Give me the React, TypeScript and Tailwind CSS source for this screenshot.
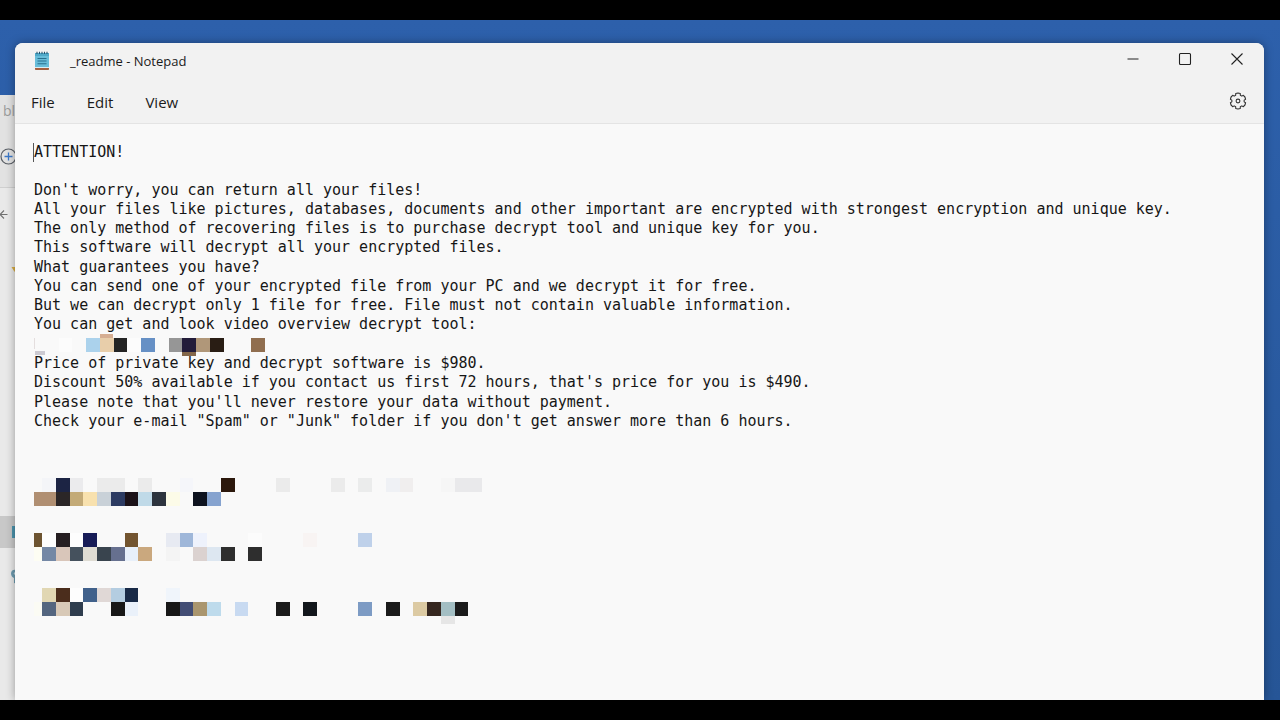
import React from "react";

type Cell = [col: number, color: string];

const PITCH = 13.75;

function Row({ origin, y, cells }: { origin: number; y: number; cells: Cell[] }) {
  return (
    <>
      {cells.map(([col, color]) => {
        const x = Math.max(0, Math.round(origin + col * PITCH));
        const end = Math.round(origin + (col + 1) * PITCH);
        return <rect key={col} x={x} y={y} width={end - x} height={14} fill={color} />;
      })}
    </>
  );
}

const contactRows: { y: number; cells: Cell[] }[] = [
  {
    y: 6,
    cells: [
      [0, "#f4f5f8"], [1, "#1c2444"], [2, "#ebebed"], [4, "#ebebeb"], [5, "#ebebeb"], [7, "#ebebeb"],
      [10, "#f5f6fa"], [13, "#2c180c"], [17, "#ebebeb"], [21, "#ebebeb"], [23, "#ebecec"],
      [25, "#eff1f5"], [26, "#f0eeee"], [29, "#f6f6f6"], [30, "#e9e9eb"], [31, "#e9e9eb"],
    ],
  },
  {
    y: 20,
    cells: [
      [-1, "#b08f72"], [0, "#b08f72"], [1, "#2b2627"], [2, "#c3aa77"], [3, "#f8e1ae"], [4, "#c9d1d8"],
      [5, "#2c3b62"], [6, "#1b1218"], [7, "#c0dae8"], [8, "#2d343e"], [9, "#fcfbe8"], [11, "#0e131f"],
      [12, "#86a3cf"],
    ],
  },
  {
    y: 61,
    cells: [
      [-1, "#6d5431"], [0, "#fdfdfd"], [1, "#261f22"], [2, "#fdfdfd"], [3, "#171c57"], [6, "#735530"],
      [9, "#e7eaf2"], [10, "#9fb7d9"], [11, "#eef2fc"], [15, "#fcfcfc"], [19, "#f8f4f3"], [23, "#bfd1ea"],
    ],
  },
  {
    y: 75,
    cells: [
      [-1, "#fdfdf3"], [0, "#7488a5"], [1, "#d9c6ba"], [2, "#45515d"], [3, "#dfdcd3"], [4, "#39444e"],
      [5, "#66708f"], [6, "#e8f0fa"], [7, "#caa87e"], [9, "#f4f4f4"], [11, "#dbd2d0"], [12, "#dde7f1"],
      [13, "#2e2e2e"], [15, "#2e2e2e"],
    ],
  },
  {
    y: 116,
    cells: [
      [0, "#e1d7b3"], [1, "#4b2d1c"], [2, "#fdfdfd"], [3, "#41618b"], [4, "#e0d8d6"], [5, "#b4cde1"],
      [6, "#192a47"], [9, "#f0f5fb"],
    ],
  },
  {
    y: 130,
    cells: [
      [-1, "#fbfbf4"], [0, "#54667f"], [1, "#d8c9b7"], [2, "#2f3d4e"], [5, "#181818"], [6, "#eaf1fa"],
      [9, "#181818"], [10, "#434e75"], [11, "#aa966e"], [12, "#bedbec"], [14, "#c8daf1"], [17, "#1b1b1b"],
      [19, "#13171c"], [23, "#7d9bc4"], [25, "#1b1b1b"], [27, "#dccaa3"], [28, "#362720"], [29, "#a3bec3"],
      [30, "#1b1b1b"],
    ],
  },
];

const linkCells: Cell[] = [
  [1, "#fcfcfc"], [3, "#abd2ec"], [4, "#e8ceaa"], [5, "#242424"], [6, "#fcfcfc"], [7, "#6690c5"], [9, "#969696"],
  [10, "#231c3a"], [11, "#b09779"], [12, "#291d14"], [15, "#906e4f"],
];

function LinkMosaic() {
  return (
    <svg width="240" height="24" viewBox="0 0 240 24" className="block" shapeRendering="crispEdges" aria-hidden="true">
      <rect x="66" y="0" width="13" height="5" fill="#d6ae92" />
      <Row origin={10.75} y={4} cells={linkCells} />
      <rect x="148" y="18" width="14" height="4" fill="#84674a" />
      <rect x="1" y="17" width="10" height="4" fill="#cccad1" />
      <rect x="0" y="4" width="1" height="11" fill="#e4dede" />
    </svg>
  );
}

function ContactMosaic() {
  return (
    <svg width="460" height="154" viewBox="0 0 460 154" className="block" shapeRendering="crispEdges" aria-hidden="true">
      {contactRows.map((r) => (
        <Row key={r.y} origin={8.2} y={r.y} cells={r.cells} />
      ))}
      <rect x="407" y="144" width="14" height="8" fill="#e6e6e6" />
    </svg>
  );
}

function NotepadIcon() {
  return (
    <svg width="16" height="20" viewBox="0 0 16 20" aria-hidden="true">
      <rect x="1" y="16" width="14" height="3" rx="0.8" fill="#a65f3e" />
      <rect x="1" y="2" width="14" height="15" rx="0.8" fill="#68bdd9" />
      <rect x="1" y="16" width="14" height="1" fill="#d9eef5" />
      <rect x="1" y="2" width="14" height="3" fill="#4fa9c9" />
      <g stroke="#24536e" strokeWidth="1.1">
        <path d="M3 .7v2.4M5.5 .7v2.4M8 .7v2.4M10.5 .7v2.4M13 .7v2.4" />
        <path d="M3.5 7.5h9M3.5 10h9M3.5 12.7h9" stroke="#28708f" />
      </g>
    </svg>
  );
}

const polar = (deg: number, r: number) => {
  const a = (deg * Math.PI) / 180;
  return `${(9 + r * Math.cos(a)).toFixed(2)},${(9 + r * Math.sin(a)).toFixed(2)}`;
};

const gearPoints = [30, 90, 150, 210, 270, 330]
  .flatMap((t) => [polar(t - 22, 6.2), polar(t - 17, 7.8), polar(t, 8), polar(t + 17, 7.8), polar(t + 22, 6.2)])
  .join(" ");

function GearIcon() {
  return (
    <svg width="18" height="18" viewBox="0 0 18 18" fill="none" stroke="#333" strokeWidth="1.1" strokeLinejoin="round" aria-hidden="true">
      <polygon points={gearPoints} />
      <circle cx="9" cy="9" r="1.9" />
    </svg>
  );
}

function BackgroundWindow() {
  return (
    <div className="absolute top-[75px] bottom-0 left-0 w-10 overflow-hidden bg-[#e9e9e9] font-['Open_Sans',sans-serif]" aria-hidden="true">
      <div className="h-[93px] border-b border-[#cfcfcf] bg-[#e2e2e2]">
        <div className="pt-2 pl-[3px] text-sm leading-4 text-[#9b9b9b]">blog</div>
        <svg width="18" height="18" viewBox="0 0 18 18" fill="none" className="mt-7">
          <circle cx="8.5" cy="9.5" r="7.5" stroke="#5a5f66" strokeWidth="1.2" />
          <path d="M8.5 5.5v8M4.5 9.5h8" stroke="#3c78c8" strokeWidth="1.3" />
        </svg>
      </div>
      <svg width="8" height="12" viewBox="0 0 8 12" fill="none" stroke="#707070" strokeWidth="1.1" className="mt-5">
        <path d="M7.5 6.5H0M4 2.5 0 6.5l4 4" />
      </svg>
      <svg width="16" height="10" viewBox="0 0 16 10" className="mt-[45px]">
        <path d="M11.5 2h4.5v6l-2-2z" fill="#d8ad45" />
      </svg>
      <div className="mt-[241px] flex h-8 items-center bg-[#c8c8c8]">
        <svg width="18" height="14" viewBox="0 0 18 14">
          <rect x="12" y="1" width="6" height="12" fill="#4b93ad" />
        </svg>
      </div>
      <svg width="18" height="18" viewBox="0 0 18 18" className="mt-5">
        <path d="M11 5q1-4 5-3l2 2v12l-4-1v-5q-3-1-3-5z" fill="#6e9bb0" />
        <circle cx="15" cy="5.5" r="1.2" fill="#c7dce5" />
      </svg>
    </div>
  );
}

const controlClass = "flex h-8 w-[52px] items-center justify-center";

function TitleBar() {
  return (
    <div className="flex h-9 justify-between">
      <div className="flex items-center gap-5 pl-[19px]">
        <NotepadIcon />
        <h1 className="text-[13px] leading-5">_readme - Notepad</h1>
      </div>
      <div className="flex pr-px">
        <button type="button" aria-label="Minimize" className={controlClass}>
          <svg width="14" height="14" viewBox="0 0 14 14" stroke="#222" strokeWidth="1.2"><path d="M1.5 7h11" /></svg>
        </button>
        <button type="button" aria-label="Maximize" className={controlClass}>
          <svg width="14" height="14" viewBox="0 0 14 14" fill="none" stroke="#222" strokeWidth="1.1"><rect x="1.5" y="1.5" width="11" height="11" rx="1" /></svg>
        </button>
        <button type="button" aria-label="Close" className={controlClass}>
          <svg width="14" height="14" viewBox="0 0 14 14" stroke="#222" strokeWidth="1.1"><path d="m1.5 1.5 11 11m0-11-11 11" /></svg>
        </button>
      </div>
    </div>
  );
}

function MenuBar() {
  return (
    <div className="flex h-11 items-center justify-between pr-[17px] pl-4">
      <nav className="flex gap-8 pt-0.5 text-[15px] leading-5">
        <button type="button">File</button>
        <button type="button">Edit</button>
        <button type="button">View</button>
      </nav>
      <button type="button" aria-label="Settings">
        <GearIcon />
      </button>
    </div>
  );
}

function Document() {
  return (
    <main className="flex-1 overflow-hidden px-[19px] pt-[19px] font-['DejaVu_Sans_Mono',monospace] text-[15px] leading-[19px] whitespace-nowrap text-[#161616]">
      <p className="relative mb-[19px]">
        <span className="absolute top-0 -left-px h-[19px] w-px bg-[#555]" />
        ATTENTION!
      </p>
      <p>Don't worry, you can return all your files!</p>
      <p>All your files like pictures, databases, documents and other important are encrypted with strongest encryption and unique key.</p>
      <p>The only method of recovering files is to purchase decrypt tool and unique key for you.</p>
      <p>This software will decrypt all your encrypted files.</p>
      <div className="pt-px">
        <p>What guarantees you have?</p>
        <p>You can send one of your encrypted file from your PC and we decrypt it for free.</p>
        <p>But we can decrypt only 1 file for free. File must not contain valuable information.</p>
        <p>You can get and look video overview decrypt tool:</p>
      </div>
      <div className="h-5">
        <LinkMosaic />
      </div>
      <p>Price of private key and decrypt software is $980.</p>
      <p>Discount 50% available if you contact us first 72 hours, that's price for you is $490.</p>
      <div className="pt-px">
        <p>Please note that you'll never restore your data without payment.</p>
        <p>Check your e-mail "Spam" or "Junk" folder if you don't get answer more than 6 hours.</p>
      </div>
      <div className="pt-[41px]">
        <ContactMosaic />
      </div>
    </main>
  );
}

export default function App() {
  return (
    <div className="flex h-screen flex-col bg-black py-5">
      <div className="relative flex flex-1 flex-col overflow-hidden bg-[#2b5ca6] bg-linear-to-b from-[#2d60ab] to-[#265596]">
        <BackgroundWindow />
        <div className="relative mt-[23px] mr-4 ml-[15px] flex flex-1 flex-col overflow-hidden rounded-t-lg bg-[#f9f9f9] shadow-[0_0_10px_rgba(0,0,0,0.35)]">
          <header className="border-b border-[#e4e4e4] bg-[#f2f2f2] font-['Open_Sans',sans-serif] text-[#1b1b1b]">
            <TitleBar />
            <MenuBar />
          </header>
          <Document />
        </div>
      </div>
    </div>
  );
}
